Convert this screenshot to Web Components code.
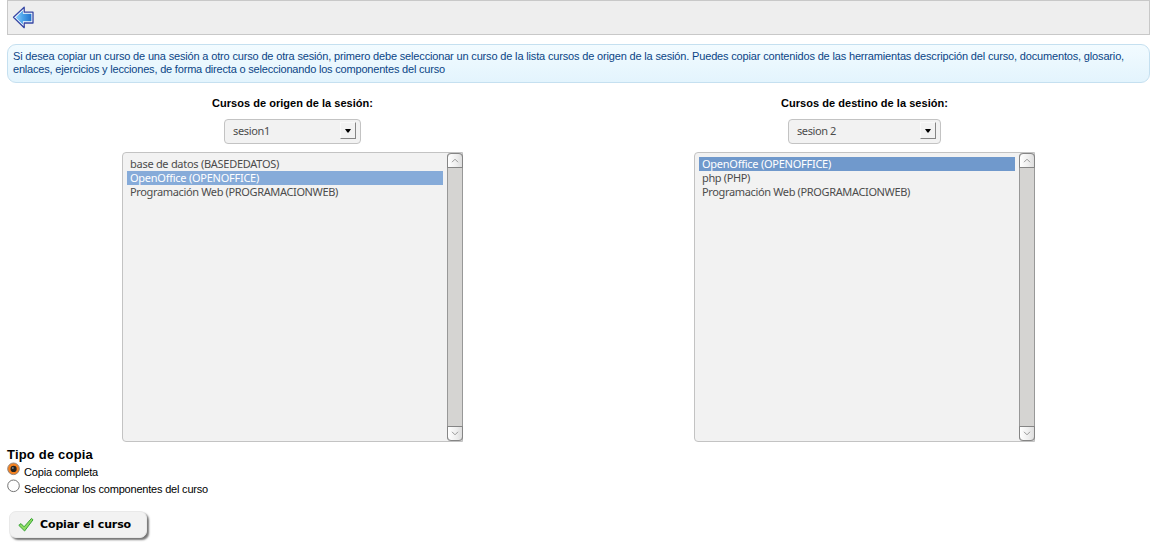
<!DOCTYPE html>
<html lang="es">
<head>
<meta charset="utf-8">
<title>Copiar curso</title>
<style>
body{margin:0;height:547px;background:#fff;font:11px/13px "Liberation Sans",Arial,sans-serif;color:#000}
</style>
</head>
<body>
<copy-page></copy-page>
<script>
class Base extends HTMLElement{
  constructor(){super();this.attachShadow({mode:'open'});}
  connectedCallback(){this.shadowRoot.innerHTML=this.view();if(this.ready)this.ready();}
}
/* Text spread by letter-spacing to a given width */
customElements.define('fit-text',class extends Base{
  view(){return `<style>:host{display:inline-block;white-space:nowrap}</style><span><slot></slot></span>`;}
  ready(){
    const s=this.shadowRoot.querySelector('span'),w=+this.getAttribute('w'),n=this.textContent.length;
    const real=s.getBoundingClientRect().width;
    if(w&&real)s.style.letterSpacing=((w-real)/n)+'px';
  }
});
customElements.define('action-bar',class extends Base{
  view(){return `<style>:host{display:flex;box-sizing:border-box;height:35px;padding:5px 0 0 4px;background:#eee;border:1px solid #c8c8c8}svg{display:block}</style>
  <svg width="24" height="24" viewBox="0 0 24 24"><defs><linearGradient id="g"><stop stop-color="#8fd0fa"/><stop offset=".45" stop-color="#4ba3ea"/><stop offset="1" stop-color="#2272cc"/></linearGradient></defs>
  <path d="M1.5 11.3 12.2 1.3V6.2H21V17H12.2V21.7Z" fill="#fff" stroke="#3546a4" stroke-width="1.3" stroke-linejoin="round"/>
  <path d="M3.6 11.4 10.9 4.6V7.8H19.4V15.3H10.9V18.4Z" fill="url(#g)"/></svg>`;}
});
customElements.define('info-message',class extends Base{
  view(){return `<style>:host{display:block;box-sizing:border-box;height:39px;margin-top:9px;padding:5px;border:1px solid #c5e0f0;border-radius:9px;background:linear-gradient(#f2fbff,#e3f4fd);color:#0b4586}</style><slot></slot>`;}
});
customElements.define('session-select',class extends Base{
  view(){return `<style>:host{display:flex;box-sizing:border-box;align-items:center;justify-content:space-between;height:25px;padding:0 4px 2px 8px;border:1px solid #c3c3c3;border-radius:4px;background:#f2f2f2;color:#4c4c4c;font:11px/14px "Noto Sans",sans-serif}
  i{box-sizing:border-box;width:16px;height:17px;border:1px solid #f9f9f9;border-right-color:#858585;border-bottom-color:#858585;background:#f2f2f2;display:flex;align-items:center;justify-content:center}svg{display:block}</style>
  <slot></slot><i><svg width="6" height="4"><path d="M0 0H6L3.6 3.6H2.4Z" fill="#000"/></svg></i>`;}
});
customElements.define('course-option',class extends Base{
  view(){return `<style>:host{display:block;height:14px;padding-left:3px;color:#4c4c4c}:host([selected]){background:var(--sel);color:#fff}</style><slot></slot>`;}
});
customElements.define('course-list',class extends Base{
  view(){return `<style>:host{display:flex;box-sizing:border-box;width:341px;height:290px;border:1px solid #c3c3c3;border-radius:4px 0 0 4px;background:#f2f2f2;font:11px/14px "Noto Sans",sans-serif}
  .o{width:316px;padding:4px 4px 0}
  .s{box-sizing:border-box;width:16px;height:288px;border:solid #989898;border-width:0 1px;background:#d5d4d2;display:flex;flex-direction:column;justify-content:space-between;margin-right:-1px;border-radius:4px}
  b{box-sizing:border-box;height:15px;margin:0 -1px;border:1px solid #858585;background:linear-gradient(90deg,#fff,#eee 60%,#ddd);display:flex;align-items:center;justify-content:center;border-radius:4px 4px 0 0}b+b{border-radius:0 0 4px 4px}</style>
  <div class="o"><slot></slot></div>
  <div class="s"><b><svg width="8" height="5"><path d="M1 4.2 4 1.2 7 4.2" fill="none" stroke="#999"/></svg></b><b><svg width="8" height="5"><path d="M1 .8 4 3.8 7 .8" fill="none" stroke="#999"/></svg></b></div>`;}
});
customElements.define('course-panel',class extends Base{
  view(){return `<style>:host{display:flex;flex-direction:column;align-items:center}.h{font-weight:bold;height:22px}::slotted(course-list){margin-top:8px}</style>
  <div class="h"><slot name="title"></slot></div><slot></slot>`;}
});
customElements.define('radio-option',class extends Base{
  view(){const c=this.hasAttribute('checked');return `<style>:host{display:flex;height:17px;gap:4px}svg{display:block}span{padding-top:4px}</style>
  <svg width="13" height="14" viewBox="0 0 13 14"><circle cx="6.5" cy="6.8" r="5.8" fill="${c?'#f58220':'#fff'}" stroke="${c?'#93857b':'#747474'}"/>${c?'<circle cx="6.6" cy="6.9" r="3.1" fill="#25221f"/><circle cx="5.8" cy="6" r="1" fill="#7b8087"/>':''}</svg><span><slot></slot></span>`;}
});
customElements.define('save-button',class extends Base{
  view(){return `<style>:host{display:flex;box-sizing:border-box;align-items:center;width:138px;height:27px;margin:15px 0 0 2px;padding-left:8px;border-radius:7px;background:#f2f2f2;border:1px solid #e9e9e9;box-shadow:2px 2px 2px #777;font:bold 11px/14px "DejaVu Sans",sans-serif}svg{display:block;margin-right:6px}</style>
  <svg width="16" height="16" viewBox="0 0 16 16"><path d="M.8 8.3 3 6.6 6.1 9.8 13.5 1.4 15 2.8 6.6 14Z" fill="#8edb62" stroke="#36a336" stroke-linejoin="round"/></svg><slot></slot>`;}
});
customElements.define('copy-page',class extends Base{
  view(){return `<style>:host{display:flow-root;width:1143px;margin-left:7px}
  .cols{display:grid;grid-template-columns:571px 573px;margin-top:14px}
  h2{font:bold 13px/15px "Liberation Sans",Arial,sans-serif;margin:5px 0 0}</style>
  <action-bar></action-bar>
  <info-message><fit-text w="1111">Si desea copiar un curso de una sesión a otro curso de otra sesión, primero debe seleccionar un curso de la lista cursos de origen de la sesión. Puedes copiar contenidos de las herramientas descripción del curso, documentos, glosario,</fit-text><br><fit-text w="432">enlaces, ejercicios y lecciones, de forma directa o seleccionando los componentes del curso</fit-text></info-message>
  <div class="cols">
   <course-panel><fit-text slot="title" w="161">Cursos de origen de la sesión:</fit-text>
    <session-select style="width:137px"><fit-text w="37">sesion1</fit-text></session-select>
    <course-list style="--sel:#86abd9"><course-option><fit-text w="149">base de datos (BASEDEDATOS)</fit-text></course-option><course-option selected><fit-text w="129">OpenOffice (OPENOFFICE)</fit-text></course-option><course-option><fit-text w="208">Programación Web (PROGRAMACIONWEB)</fit-text></course-option></course-list></course-panel>
   <course-panel><fit-text slot="title" w="167">Cursos de destino de la sesión:</fit-text>
    <session-select style="width:153px"><fit-text w="39">sesion 2</fit-text></session-select>
    <course-list style="--sel:#7099cc"><course-option selected><fit-text w="129">OpenOffice (OPENOFFICE)</fit-text></course-option><course-option><fit-text w="48">php (PHP)</fit-text></course-option><course-option><fit-text w="208">Programación Web (PROGRAMACIONWEB)</fit-text></course-option></course-list></course-panel>
  </div>
  <h2><fit-text w="86">Tipo de copia</fit-text></h2>
  <radio-option checked><fit-text w="74">Copia completa</fit-text></radio-option>
  <radio-option><fit-text w="184">Seleccionar los componentes del curso</fit-text></radio-option>
  <save-button><fit-text w="91">Copiar el curso</fit-text></save-button>`;}
});
</script>
</body>
</html>
